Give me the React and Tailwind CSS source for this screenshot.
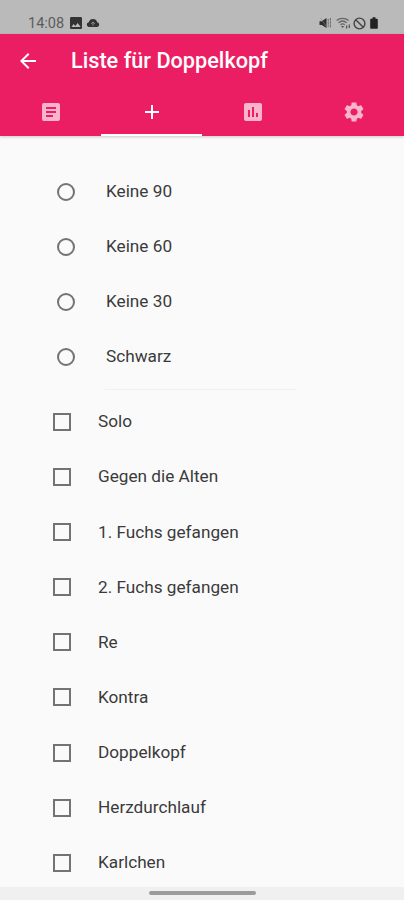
import {
  MdAdd,
  MdArrowBack,
  MdArticle,
  MdImage,
  MdPoll,
  MdSettings,
} from "react-icons/md";

const radios = ["Keine 90", "Keine 60", "Keine 30", "Schwarz"];

const checks = [
  "Solo",
  "Gegen die Alten",
  "1. Fuchs gefangen",
  "2. Fuchs gefangen",
  "Re",
  "Kontra",
  "Doppelkopf",
  "Herzdurchlauf",
  "Karlchen",
];

const tabs = [
  { id: "list", label: "Liste", Icon: MdArticle },
  { id: "add", label: "Neu", Icon: MdAdd },
  { id: "stats", label: "Statistik", Icon: MdPoll },
  { id: "settings", label: "Einstellungen", Icon: MdSettings },
];

function CloudIcon() {
  return (
    <svg viewBox="0 0 14 10" className="w-[14px] h-[10px]">
      <path d="M2.6 9a2.400 2.400 0 0 1 .2-4.700A4.300 4.300 0 0 1 11.200 4.300a2.400 2.400 0 0 1 .2 4.700z" fill="#333" />
      <path d="M7 7.800V4.200M5.200 5.800L7 4l1.800 1.800" fill="none" stroke="#999" strokeWidth="0.900" />
    </svg>
  );
}

function MuteIcon() {
  return (
    <svg viewBox="0 0 13 12" className="w-[13px] h-[12px]">
      <path d="M.5 4.200h2.300L7.500 1v10L2.800 8H.5z" fill="#2e2e2e" />
      <path d="M1.500 1l6.500 9.500" stroke="#888" strokeWidth=".6" />
      <path d="M9.200 2v8M11.400 1v10" stroke="#666" strokeWidth="1" strokeDasharray="2.500 .7" />
    </svg>
  );
}

function WifiIcon() {
  return (
    <svg viewBox="0 0 15 12" className="w-[15px] h-[12px]" fill="none" stroke="#666" strokeWidth="1.300">
      <path d="M.6 3.600a9.200 9.200 0 0 1 12 0M2.500 5.700a6.400 6.400 0 0 1 8.200 0M4.400 7.700a3.500 3.500 0 0 1 4.400 0" />
      <path d="M5 9h3.200L6.600 11z" fill="#555" stroke="none" />
      <path d="M10.600 11.500V8.500M13.300 7.500v3.500" stroke="#555" />
    </svg>
  );
}

function BlockedIcon() {
  return (
    <svg viewBox="0 0 13 13" className="w-[13px] h-[13px]" fill="none" stroke="#444" strokeWidth="1.400">
      <circle cx="6.500" cy="6.500" r="5.400" />
      <path d="M2.700 2.700l7.600 7.600" />
    </svg>
  );
}

function BatteryIcon() {
  return (
    <svg viewBox="0 0 8 12" className="w-[8px] h-[12px]" fill="#222">
      <path d="M2.500.3h3v1.500H7q.8 0 .8.800v8.400q0 .8-.8.800H1q-.8 0-.8-.8V2.600q0-.8.800-.8h1.500z" />
    </svg>
  );
}

function StatusBar() {
  return (
    <div className="flex h-[34px] items-end justify-between bg-[#bababa] pl-[28px] pr-[26px] pb-[4px] shrink-0">
      <div className="flex items-center h-[14px]">
        <span className="w-[38px] pt-[2px] text-[14.500px] leading-[14px] text-[#5c5c5c]">14:08</span>
        <MdImage className="ml-[2px] size-[16px] text-[#333]" />
        <span className="ml-[2px]"><CloudIcon /></span>
      </div>
      <div className="flex items-center h-[14px]">
        <MuteIcon />
        <span className="ml-[4px]"><WifiIcon /></span>
        <span className="ml-[2px]"><BlockedIcon /></span>
        <span className="ml-[4px]"><BatteryIcon /></span>
      </div>
    </div>
  );
}

function Header() {
  return (
    <header className="flex h-[102px] shrink-0 flex-col bg-[#ec1e63] text-white shadow-[0_1px_3px_rgba(0,0,0,0.2)]">
      <div className="flex h-[54px] items-center pl-4">
        <button aria-label="Zurück">
          <MdArrowBack className="size-6" />
        </button>
        <h1 className="ml-[31px] text-[21.700px] font-medium leading-6">Liste für Doppelkopf</h1>
      </div>
      <nav className="grid flex-1 grid-cols-4">
        {tabs.map(({ id, label, Icon }) => (
          <button
            key={id}
            aria-label={label}
            className={
              id === "add"
                ? "flex items-center justify-center border-b-2 border-white pt-[1px]"
                : "flex items-center justify-center border-b-2 border-transparent pt-[1px] text-[#fab4cd]"
            }
          >
            <Icon className="size-6" />
          </button>
        ))}
      </nav>
    </header>
  );
}

export default function App() {
  return (
    <div className="flex h-[900px] w-[404px] flex-col overflow-hidden bg-[#fafafa] font-['Roboto',sans-serif]">
      <StatusBar />
      <Header />
      <main className="flex-1 overflow-hidden pt-[28px] text-[17.200px] leading-6 text-[#3a3a3a]">
        {radios.map((name) => (
          <div key={name} className="flex h-[55.150px] items-center pl-[57px]">
            <span className="size-[18px] rounded-full border-2 border-[#737373]" />
            <span className="ml-[31px] pb-[2px]">{name}</span>
          </div>
        ))}
        <div className="mt-[4px] mb-[4.600px] ml-[105px] h-px w-[192px] bg-[#f0f0f0]" />
        {checks.map((name) => (
          <div key={name} className="flex h-[55.150px] items-center pl-[53px]">
            <span className="size-[18px] border-2 border-[#737373]" />
            <span className="ml-[27px] pb-px">{name}</span>
          </div>
        ))}
      </main>
      <footer className="flex h-[13px] shrink-0 justify-center bg-[#f0f0f0] pt-[4px]">
        <div className="h-[4px] w-[107px] rounded-full bg-[#9b9b9b]" />
      </footer>
    </div>
  );
}
